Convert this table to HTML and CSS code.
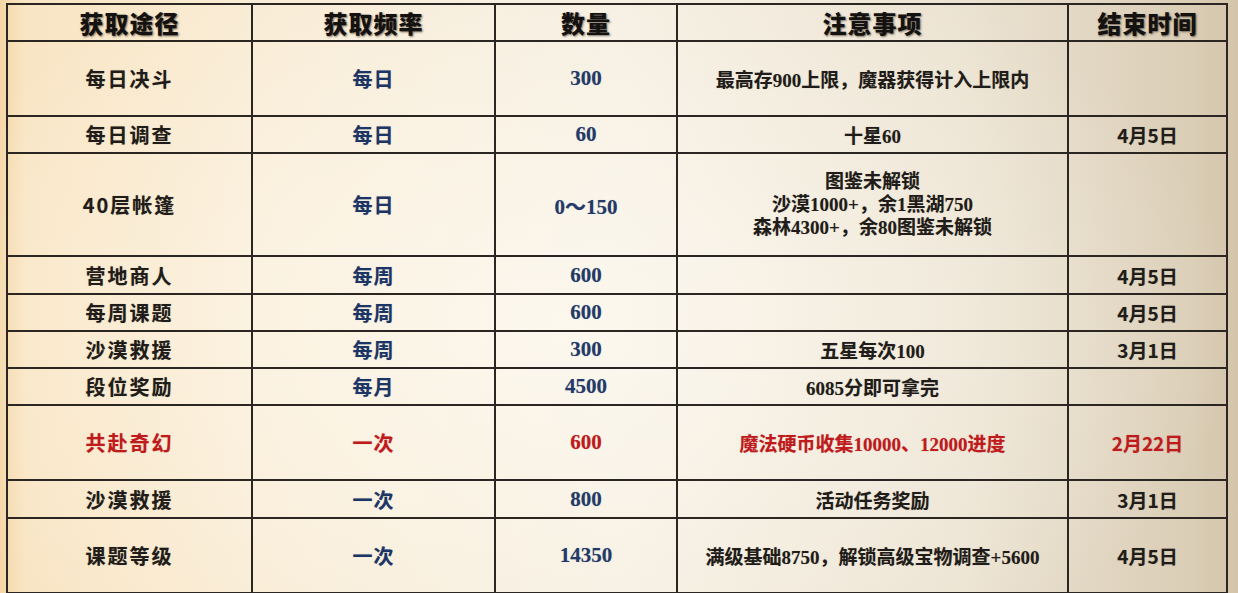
FILE: index.html
```html
<!DOCTYPE html>
<html lang="zh-CN">
<head>
<meta charset="utf-8">
<title>获取途径</title>
<link rel="stylesheet" href="styles.css">
</head>
<body>
<div class="page">
  <table class="sheet">
    <colgroup>
      <col class="c1"><col class="c2"><col class="c3"><col class="c4"><col class="c5">
    </colgroup>
    <thead>
      <tr class="h37">
        <th>获取途径</th><th>获取频率</th><th>数量</th><th>注意事项</th><th>结束时间</th>
      </tr>
    </thead>
    <tbody>
      <tr class="h75">
        <td class="name">每日决斗</td><td class="freq">每日</td><td class="num">300</td>
        <td class="note">最高存900上限，魔器获得计入上限内</td><td class="end"></td>
      </tr>
      <tr class="h37">
        <td class="name">每日调查</td><td class="freq">每日</td><td class="num">60</td>
        <td class="note">十星60</td><td class="end">4月5日</td>
      </tr>
      <tr class="h103">
        <td class="name">40层帐篷</td><td class="freq">每日</td><td class="num">0～150</td>
        <td class="note multi">图鉴未解锁<br>沙漠1000+，余1黑湖750<br>森林4300+，余80图鉴未解锁</td><td class="end"></td>
      </tr>
      <tr class="h38">
        <td class="name">营地商人</td><td class="freq">每周</td><td class="num">600</td>
        <td class="note"></td><td class="end">4月5日</td>
      </tr>
      <tr class="h37">
        <td class="name">每周课题</td><td class="freq">每周</td><td class="num">600</td>
        <td class="note"></td><td class="end">4月5日</td>
      </tr>
      <tr class="h37">
        <td class="name">沙漠救援</td><td class="freq">每周</td><td class="num">300</td>
        <td class="note">五星每次100</td><td class="end">3月1日</td>
      </tr>
      <tr class="h37">
        <td class="name">段位奖励</td><td class="freq">每月</td><td class="num">4500</td>
        <td class="note">6085分即可拿完</td><td class="end"></td>
      </tr>
      <tr class="h75 hot">
        <td class="name">共赴奇幻</td><td class="freq">一次</td><td class="num">600</td>
        <td class="note">魔法硬币收集10000、12000进度</td><td class="end">2月22日</td>
      </tr>
      <tr class="h38">
        <td class="name">沙漠救援</td><td class="freq">一次</td><td class="num">800</td>
        <td class="note">活动任务奖励</td><td class="end">3月1日</td>
      </tr>
      <tr class="h75">
        <td class="name">课题等级</td><td class="freq">一次</td><td class="num">14350</td>
        <td class="note">满级基础8750，解锁高级宝物调查+5600</td><td class="end">4月5日</td>
      </tr>
    </tbody>
  </table>
</div>
</body>
</html>
```
FILE: styles.css
```css
html, body {
  margin: 0;
  padding: 0;
  height: 100%;
  overflow: hidden;
}
body {
  background:
    radial-gradient(ellipse 55% 70% at 45% 55%, rgba(255, 252, 244, 0.7), rgba(255, 252, 244, 0) 100%),
    linear-gradient(90deg, #f4d6a6 0%, #f9e5c4 2%, #f9ebd3 20%, #f5eee1 50%, #ebe2d1 78%, #dbceb7 96%, #d4c4aa 100%);
  font-family: "Noto Sans CJK SC", "Noto Sans", sans-serif;
  color: #1e1b18;
}
.page {
  padding: 3px 10px 0 6px;
}
.sheet {
  border-collapse: collapse;
  table-layout: fixed;
  width: 1222px;
}
.c1 { width: 245px; }
.c2 { width: 243px; }
.c3 { width: 182px; }
.c4 { width: 391px; }
.c5 { width: 159px; }

.sheet th,
.sheet td {
  border: 2px solid #2b2621;
  padding: 0;
  text-align: center;
  vertical-align: middle;
}
.h37 { height: 37px; }
.h38 { height: 38px; }
.h75 { height: 75px; }
.h103 { height: 103px; }

.sheet th {
  font-size: 24px;
  font-weight: 900;
  letter-spacing: 1px;
  color: #141210;
  line-height: 30px;
  text-shadow: 1px 1px 2px rgba(40, 30, 20, 0.6);
}
.name {
  font-size: 20px;
  font-weight: 700;
  letter-spacing: 2px;
  color: #1f1c19;
  text-shadow: 0 0 1px rgba(40, 30, 20, 0.35);
}
.freq {
  font-size: 20px;
  font-weight: 700;
  letter-spacing: 1px;
  color: #1c3564;
  text-shadow: 0 0 1px rgba(20, 40, 80, 0.3);
}
.num {
  font-family: "Liberation Serif", "Noto Sans CJK SC", serif;
  font-size: 21px;
  font-weight: 700;
  color: #233a68;
  text-shadow: 0 0 1px rgba(20, 40, 80, 0.3);
}
.note {
  font-family: "Liberation Serif", "Noto Sans CJK SC", serif;
  font-size: 19px;
  font-weight: 700;
  color: #1f1c19;
  text-shadow: 0 0 1px rgba(40, 30, 20, 0.3);
}
.note.multi {
  line-height: 23px;
}
.end {
  font-size: 19px;
  font-weight: 700;
  color: #1f1c19;
  text-shadow: 0 0 1px rgba(40, 30, 20, 0.3);
}
.hot .name,
.hot .freq,
.hot .num,
.hot .note,
.hot .end {
  color: #c01a1c;
  font-weight: 700;
  text-shadow: 0 0 1px rgba(120, 20, 20, 0.35);
}
```
